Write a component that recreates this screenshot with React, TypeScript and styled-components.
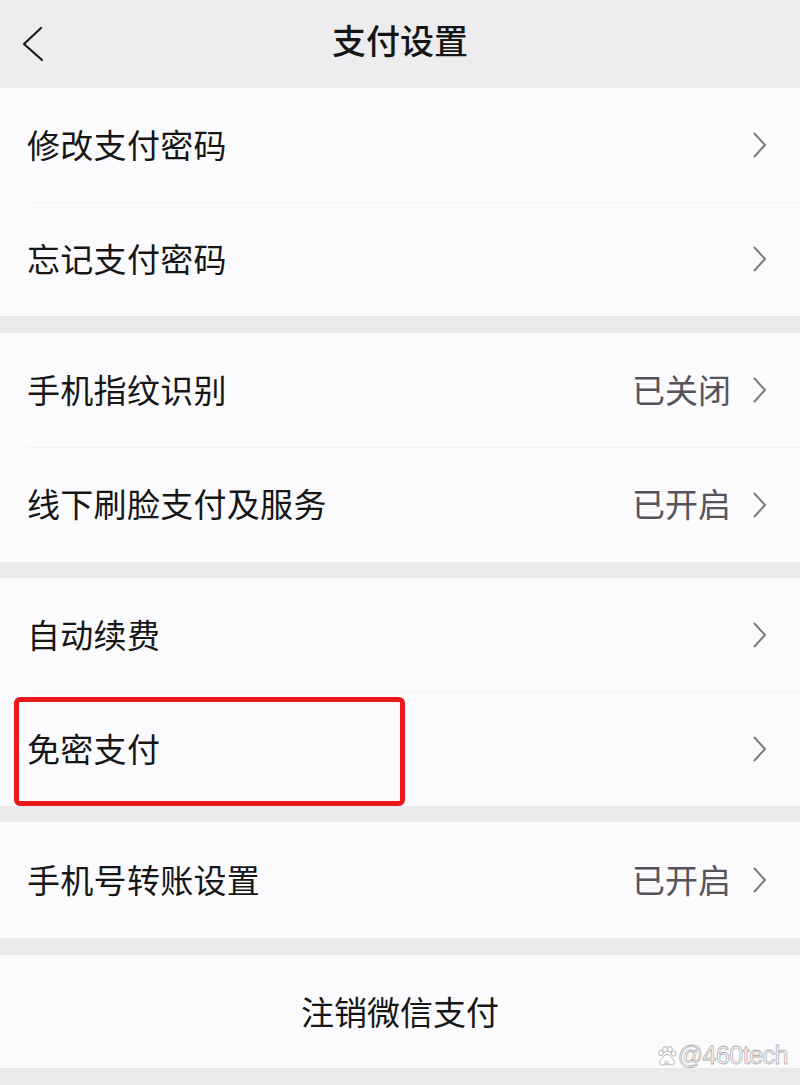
import React from "react";
import styled, { createGlobalStyle } from "styled-components";

const Global = createGlobalStyle`
  html, body { margin: 0; padding: 0; background: #eaeaed; }
  body { font-family: "Noto Sans CJK SC", "Noto Sans", sans-serif; }
  * { box-sizing: border-box; }
`;

const Page = styled.div`
  position: relative;
  width: 800px;
  height: 1085px;
  background: #eaeaed;
  display: flex;
  flex-direction: column;
  overflow: hidden;
`;

const Header = styled.header`
  height: 88px;
  background: #ededef;
  display: grid;
  grid-template-columns: 1fr auto 1fr;
  align-items: center;
`;

const Back = styled.div`
  display: flex;
  align-items: center;
  padding-left: 22px;
  height: 88px;
`;

const Title = styled.h1`
  margin: 0;
  font-size: 34px;
  font-weight: 500;
  color: #151515;
  line-height: 1;
  padding-bottom: 8px;
`;

const Group = styled.section<{ $gap: number }>`
  margin-top: ${(p) => p.$gap}px;
  background: #fbfbfd;
  display: flex;
  flex-direction: column;
`;

const Row = styled.div<{ $h: number; $divider?: boolean }>`
  position: relative;
  height: ${(p) => p.$h}px;
  display: flex;
  align-items: center;
  padding: 0 33px 0 27px;
  &::before {
    content: "";
    display: ${(p) => (p.$divider ? "block" : "none")};
    position: absolute;
    top: 0;
    left: 27px;
    right: 0;
    height: 1px;
    background: #f2f2f5;
  }
`;

const Label = styled.span`
  flex: 1;
  font-size: 33px;
  color: #161616;
  line-height: 1;
  padding-bottom: 2px;
  letter-spacing: 0.3px;
`;

const Value = styled.span`
  font-size: 33px;
  color: #56535a;
  line-height: 1;
  margin-right: 22px;
  padding-bottom: 2px;
`;

const Center = styled.div`
  height: 113px;
  background: #fbfbfd;
  margin-top: 17px;
  display: flex;
  align-items: center;
  justify-content: center;
  font-size: 33px;
  color: #161616;
  padding-bottom: 2px;
`;

const Highlight = styled.div`
  position: absolute;
  left: 14px;
  top: 5px;
  width: 391px;
  height: 109px;
  border: 5px solid #e8181c;
  border-radius: 6px;
  pointer-events: none;
`;

const Watermark = styled.div`
  position: absolute;
  right: 12px;
  bottom: 17px;
  display: flex;
  align-items: center;
  gap: 1px;
`;

const WatermarkText = styled.span`
  font-family: "Liberation Sans", Arial, sans-serif;
  font-size: 25px;
  line-height: 1;
  color: rgba(255, 255, 255, 0.9);
  -webkit-text-stroke: 0.8px #b0b0b0;
  letter-spacing: -0.5px;
`;

const Chevron = () => (
  <svg width="14" height="26" viewBox="0 0 14 26" fill="none">
    <path d="M1.5 1.5 L12 13 L1.5 24.5" stroke="#7d7b80" strokeWidth="2" strokeLinecap="round" strokeLinejoin="round" />
  </svg>
);

const BackArrow = () => (
  <svg width="22" height="36" viewBox="0 0 22 36" fill="none">
    <path d="M19 2 L2 18 L20 34" stroke="#1a1a1a" strokeWidth="2.2" strokeLinecap="round" strokeLinejoin="round" />
  </svg>
);

const Paw = () => (
  <svg width="20" height="20" viewBox="0 0 20 20" fill="rgba(255,255,255,0.85)" stroke="#b0b0b0" strokeWidth="1">
    <ellipse cx="4" cy="7" rx="2.3" ry="2.8" />
    <ellipse cx="8" cy="3.4" rx="2.3" ry="2.8" />
    <ellipse cx="13" cy="3.4" rx="2.3" ry="2.8" />
    <ellipse cx="16.5" cy="7.5" rx="2.2" ry="2.7" />
    <path d="M10 8.5 C7 8.5 6 12 3.5 14 C1.5 16 3 19.5 6 19 C8 18.6 9 18.2 10.2 18.2 C11.5 18.2 12.5 18.8 14.5 19 C17.5 19.2 18.5 16 16.5 14 C14 11.8 13 8.5 10 8.5 Z" />
    <text x="7" y="17.5" fontSize="5" fontFamily="Liberation Sans, sans-serif" fill="#a3a3a3" stroke="none">du</text>
  </svg>
);

type Item = { label: string; value?: string; highlight?: boolean };

const groups: { gap: number; items: Item[] }[] = [
  { gap: 0, items: [{ label: "修改支付密码" }, { label: "忘记支付密码" }] },
  { gap: 17, items: [{ label: "手机指纹识别", value: "已关闭" }, { label: "线下刷脸支付及服务", value: "已开启" }] },
  { gap: 16, items: [{ label: "自动续费" }, { label: "免密支付", highlight: true }] },
  { gap: 16, items: [{ label: "手机号转账设置", value: "已开启" }] },
];

export default function App() {
  return (
    <>
      <Global />
      <Page>
        <Header>
          <Back>
            <BackArrow />
          </Back>
          <Title>支付设置</Title>
          <div />
        </Header>
        {groups.map((g, gi) => (
          <Group key={gi} $gap={g.gap}>
            {g.items.map((it, i) => (
              <Row key={it.label} $h={gi === 3 ? 116 : i === 1 && gi === 1 ? 115 : 114} $divider={i > 0}>
                <Label>{it.label}</Label>
                {it.value && <Value>{it.value}</Value>}
                <Chevron />
                {it.highlight && <Highlight />}
              </Row>
            ))}
          </Group>
        ))}
        <Center>注销微信支付</Center>
        <Watermark>
          <Paw />
          <WatermarkText>@460tech</WatermarkText>
        </Watermark>
      </Page>
    </>
  );
}
